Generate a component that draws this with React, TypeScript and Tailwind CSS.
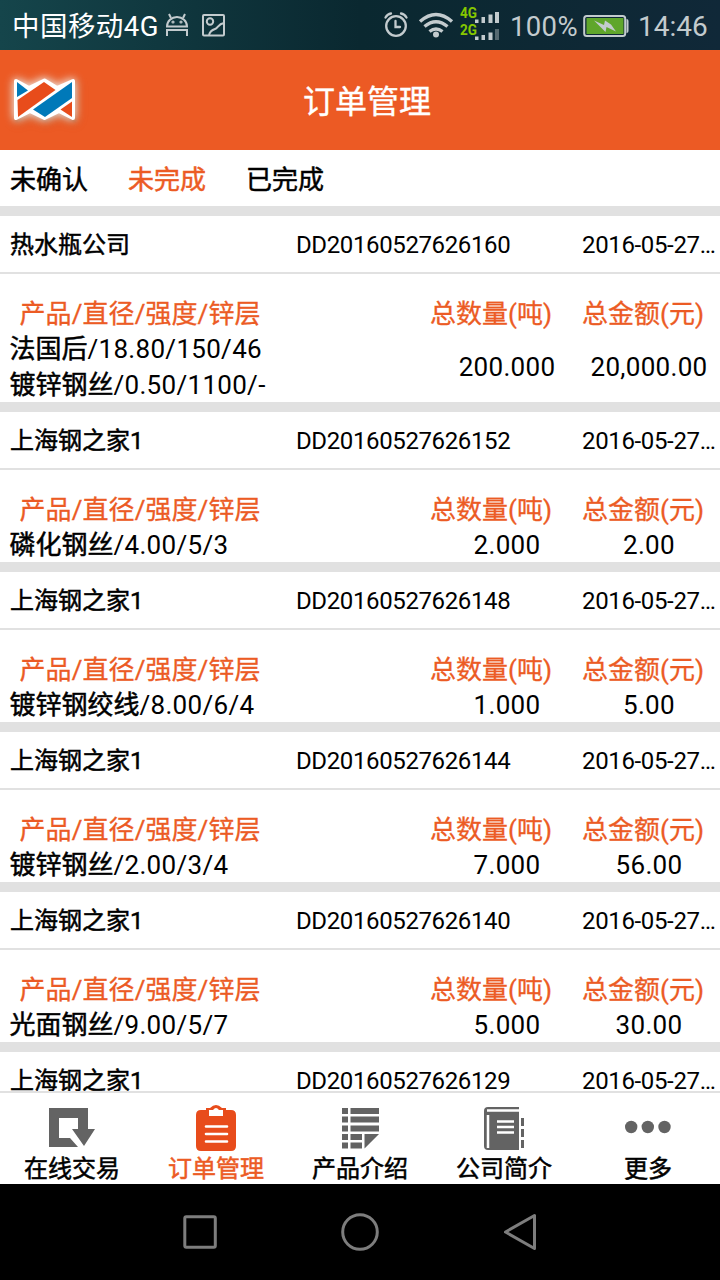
import React, { useState } from 'react';

type Order = {
  company: string;
  code: string;
  products: { name: string; spec: string }[];
  quantity?: string;
  amount?: string;
};

const orders: Order[] = [
  {
    company: '热水瓶公司',
    code: 'DD20160527626160',
    products: [
      { name: '法国后', spec: '/18.80/150/46' },
      { name: '镀锌钢丝', spec: '/0.50/1100/-' },
    ],
    quantity: '200.000',
    amount: '20,000.00',
  },
  { company: '上海钢之家1', code: 'DD20160527626152', products: [{ name: '磷化钢丝', spec: '/4.00/5/3' }], quantity: '2.000', amount: '2.00' },
  { company: '上海钢之家1', code: 'DD20160527626148', products: [{ name: '镀锌钢绞线', spec: '/8.00/6/4' }], quantity: '1.000', amount: '5.00' },
  { company: '上海钢之家1', code: 'DD20160527626144', products: [{ name: '镀锌钢丝', spec: '/2.00/3/4' }], quantity: '7.000', amount: '56.00' },
  { company: '上海钢之家1', code: 'DD20160527626140', products: [{ name: '光面钢丝', spec: '/9.00/5/7' }], quantity: '5.000', amount: '30.00' },
  { company: '上海钢之家1', code: 'DD20160527626129', products: [] },
];

const tabs = ['未确认', '未完成', '已完成'];

const StatusBar = () => (
  <div className="flex h-[50px] shrink-0 items-center bg-linear-to-r from-[#15454b] via-[#0a2830] to-[#102838] pl-3 text-[#c3cbce]">
    <span className="w-[146px] pt-[3px] text-[27.500px] leading-[47px] tracking-[0.450px] whitespace-nowrap text-white">中国移动4G</span>
    <svg className="ml-[7px] h-[50px] w-6 shrink-0" viewBox="0 0 24 50" fill="none" stroke="currentColor" strokeWidth="2">
      <path d="M2 26.500a10 9.500 0 0 1 20 0z" />
      <path d="M6 18 4 14M18 18l2-4M2 36v-6h20v6" />
      <circle cx="8" cy="22" r=".6" />
      <circle cx="16" cy="22" r=".6" />
    </svg>
    <svg className="ml-3 h-[50px] w-6 shrink-0" viewBox="0 0 24 50" fill="none" stroke="currentColor" strokeWidth="2">
      <rect x="2" y="15" width="21" height="20.500" rx="1" />
      <circle cx="9" cy="21.500" r="3.200" />
      <path d="M8 35c1-4 3-5 6-6s3-5 9-6" />
    </svg>
    <svg className="ml-auto h-[50px] w-[26px] shrink-0" viewBox="0 0 26 50" fill="none" stroke="currentColor" strokeWidth="2.300" strokeLinecap="round">
      <circle cx="13" cy="26" r="9.800" />
      <path d="M12.500 21v6H17M2.500 17.500q2-3.500 5.500-4M23.500 17.500q-2-3.500-5.500-4" />
    </svg>
    <svg className="ml-[9px] h-[50px] w-9 shrink-0" viewBox="0 0 36 50" fill="none" stroke="currentColor" strokeWidth="3.400">
      <path d="M2 21.500Q18 7.500 34 21.500M6.500 26.500q11.500-9.500 23 0M11.500 31.500q6.500-5 13 0" />
      <circle cx="18" cy="34.500" r="3" fill="currentColor" stroke="none" />
    </svg>
    <svg className="ml-1.5 h-[50px] w-10 shrink-0" viewBox="0 0 40 50" fill="currentColor">
      <g className="fill-[#86c800] text-[14px] font-bold">
        <text x="0" y="18" textLength="17" lengthAdjust="spacingAndGlyphs">4G</text>
        <text x="0" y="35" textLength="17" lengthAdjust="spacingAndGlyphs">2G</text>
      </g>
      <path d="M15 19.500h3.500V23H15zM21.500 17H25v6h-3.500zM28.500 14.500h4V23h-4zM35 12h4v11h-4zM15 36.500h3.500V40H15zM21.500 35H25v5h-3.500zM28.500 32.500h4V40h-4z" />
      <path d="M35 29h4v11h-4z" className="opacity-40" />
    </svg>
    <span className="ml-[10px] w-[71px] pt-[3px] text-[27.500px] leading-[47px] tracking-[0.350px] whitespace-nowrap">100%</span>
    <svg className="ml-[2px] h-[50px] w-[46px] shrink-0" viewBox="0 0 46 50">
      <rect x="1.200" y="16" width="41" height="20" rx="2.500" fill="none" stroke="currentColor" strokeWidth="2" />
      <path d="M3.500 18h37v16h-37z" fill="#5fa62b" />
      <path d="M43.500 19q2 0 2 2v10q0 2-2 2z" fill="currentColor" />
      <path d="m11 20.500 10 4.500 1-4.500 6 4 5 7-9.500-4.500-1 5z" fill="currentColor" />
    </svg>
    <span className="ml-[9px] w-[82px] pt-[3px] text-[28px] leading-[47px] whitespace-nowrap">14:46</span>
  </div>
);

const Logo = () => (
  <svg className="h-[60px] w-20 overflow-visible" viewBox="0 0 80 60">
    <g className="[filter:drop-shadow(0_0_5px_#ffffffc0)_drop-shadow(0_0_3px_#ffffff70)_drop-shadow(1px_2px_1px_#80401080)]">
      <path d="M16 11 29 18 44.500 10.500 57 18 73 11V48L59 41 44.500 48 30 41 16 48z" fill="#fff" stroke="#fff" strokeWidth="4" strokeLinejoin="round" />
    </g>
    <path d="M17 12 28 20.500 17 27z" fill="#0079b9" />
    <path d="M17.500 30 44 12l11.500 8L18 47z" fill="#e84c1b" />
    <path d="M33 39.500 72 12v16L45 47z" fill="#0079b9" />
    <path d="M60.500 39.500 72 31.500V47z" fill="#e84c1b" />
  </svg>
);

const OrderCard: React.FC<{ order: Order }> = ({ order }) => (
  <section className="shrink-0 border-t-10 border-[#e1e1e1] bg-white">
    <div className="flex h-[58px] items-center border-b-2 border-[#e1e1e1] pt-[2px] text-[24px] leading-[54px] whitespace-nowrap">
      <span className="w-[284px] pl-2.5 [-webkit-text-stroke:0.5px]">{order.company}</span>
      <span className="w-[298px] pl-3 tracking-[-0.380px]">{order.code}</span>
      <span className="tracking-[-0.350px]">2016-05-27…</span>
    </div>
    {order.products.length > 0 && (
      <div className="pt-5 text-[26px] leading-[33px] whitespace-nowrap">
        <div className="flex h-9 pt-[5px] leading-[31px] text-[#ec5b24] [-webkit-text-stroke:0.3px]">
          <span className="w-[430px] pl-[19.500px] tracking-[0.080px]">产品/直径/强度/锌层</span>
          <span className="w-[152px]">总数量(吨)</span>
          <span>总金额(元)</span>
        </div>
        <div className="flex items-center tracking-[0.300px]">
          <div className="w-[430px] pl-[9.500px]">
            {order.products.map((product) => (
              <div key={product.name} className="h-9 pt-[3px]">
                <span className="tracking-normal [-webkit-text-stroke:0.5px]">{product.name}</span>
                {product.spec}
              </div>
            ))}
          </div>
          <span className="w-[154px] pt-[3px] text-center">{order.quantity}</span>
          <span className="w-[130px] pt-[3px] text-center">{order.amount}</span>
        </div>
      </div>
    )}
  </section>
);

const TradeIcon = () => (
  <svg className="h-12 w-12" viewBox="0 0 48 48" fill="#636363">
    <path d="M1 4h39v21h7L36 42 24 25h6V14H11v20h11l8 9H1z" />
  </svg>
);

const OrderIcon = () => (
  <svg className="h-12 w-12" viewBox="0 0 48 48">
    <path d="M9 6h5V4h4q6-6 12 0h4v2h5q5 0 5 5v31q0 5-5 5H9q-5 0-5-5V11q0-5 5-5z" fill="#e84c1b" />
    <path d="M17 6h4q3-4 6 0h4v6H17z" fill="#fff" />
    <path d="M14 22.500h21M14 30h21M14 37.500h21" stroke="#fff" strokeWidth="2.600" strokeLinecap="round" />
  </svg>
);

const ProductIcon = () => (
  <svg className="h-12 w-12" viewBox="0 0 48 48" fill="#636363">
    <path d="M6 4h6v6H6zM14.500 4H43v6H14.500zM6 12.500h6v6H6zM14.500 12.500H43v6H14.500zM6 21.500h6v6H6zM14.500 21.500H43v6H14.500zM6 30h6v6H6zM14.500 30H26v6H14.500zM6 38.500h6v6H6zM14.500 38.500H26v6H14.500zM28.500 30H43L28.500 44.500z" />
  </svg>
);

const CompanyIcon = () => (
  <svg className="h-12 w-12" viewBox="0 0 48 48">
    <path d="M8 3h31v43H8q-4 0-4-4V7q0-4 4-4z" fill="#636363" />
    <path d="M7 6.500h32M8 11v33" stroke="#fff" strokeWidth="2.500" />
    <path d="M17 17.500h17M17 23h17M17 28.500h17" stroke="#fff" strokeWidth="2.500" />
    <path d="M41 14h3v8h-3zM41 25h3v8h-3zM41 36h3v8h-3z" fill="#636363" />
  </svg>
);

const MoreIcon = () => (
  <svg className="h-12 w-12" viewBox="0 0 48 48" fill="#636363">
    <circle cx="7.200" cy="23" r="6.200" />
    <circle cx="23.800" cy="23" r="6.200" />
    <circle cx="40.500" cy="23" r="6.200" />
  </svg>
);

const menu = [
  { label: '在线交易', icon: <TradeIcon /> },
  { label: '订单管理', icon: <OrderIcon />, active: true },
  { label: '产品介绍', icon: <ProductIcon /> },
  { label: '公司简介', icon: <CompanyIcon /> },
  { label: '更多', icon: <MoreIcon /> },
];

const App: React.FC = () => {
  const [tab, setTab] = useState('未完成');

  return (
    <div className="flex h-[1280px] w-[720px] flex-col overflow-hidden bg-white font-[Roboto,'Noto_Sans_CJK_SC',sans-serif] text-black">
      <StatusBar />

      <header className="flex h-[100px] shrink-0 items-center bg-[#ec5a24] text-white">
        <Logo />
        <h1 className="ml-[223px] pt-1 text-[32px] leading-[96px] [-webkit-text-stroke:0.4px]">订单管理</h1>
      </header>

      <nav className="flex h-[56px] shrink-0 items-center gap-10 pt-[3px] pl-2.5 text-[26px] leading-[52px] [-webkit-text-stroke:0.5px]">
        {tabs.map((name) => (
          <button key={name} onClick={() => setTab(name)} className={tab === name ? 'text-[#ec5b24]' : ''}>
            {name}
          </button>
        ))}
      </nav>

      <main className="flex min-h-0 flex-1 flex-col overflow-hidden">
        {orders.map((order) => (
          <OrderCard key={order.code} order={order} />
        ))}
      </main>

      <footer className="grid h-[93px] shrink-0 grid-cols-5 border-t-2 border-[#e1e1e1] bg-white">
        {menu.map((item) => (
          <button key={item.label} className="flex flex-col items-center pt-[11px]">
            {item.icon}
            <span className={`text-[24px] leading-[34px] [-webkit-text-stroke:0.5px] ${item.active ? 'text-[#ec5b24]' : ''}`}>{item.label}</span>
          </button>
        ))}
      </footer>

      <div className="flex h-24 shrink-0 items-center justify-center gap-[120px] bg-black">
        <svg className="size-10" viewBox="0 0 40 40" fill="none" stroke="#7d7d7d" strokeWidth="3">
          <rect x="4.800" y="4.800" width="30.500" height="30.500" rx="1.500" />
        </svg>
        <svg className="size-10" viewBox="0 0 40 40" fill="none" stroke="#7d7d7d" strokeWidth="3">
          <circle cx="20" cy="20" r="17.300" />
        </svg>
        <svg className="size-10" viewBox="0 0 40 40" fill="none" stroke="#7d7d7d" strokeWidth="3" strokeLinejoin="round">
          <path d="M34.500 3.500v33L5.500 20z" />
        </svg>
      </div>
    </div>
  );
};

export default App;
